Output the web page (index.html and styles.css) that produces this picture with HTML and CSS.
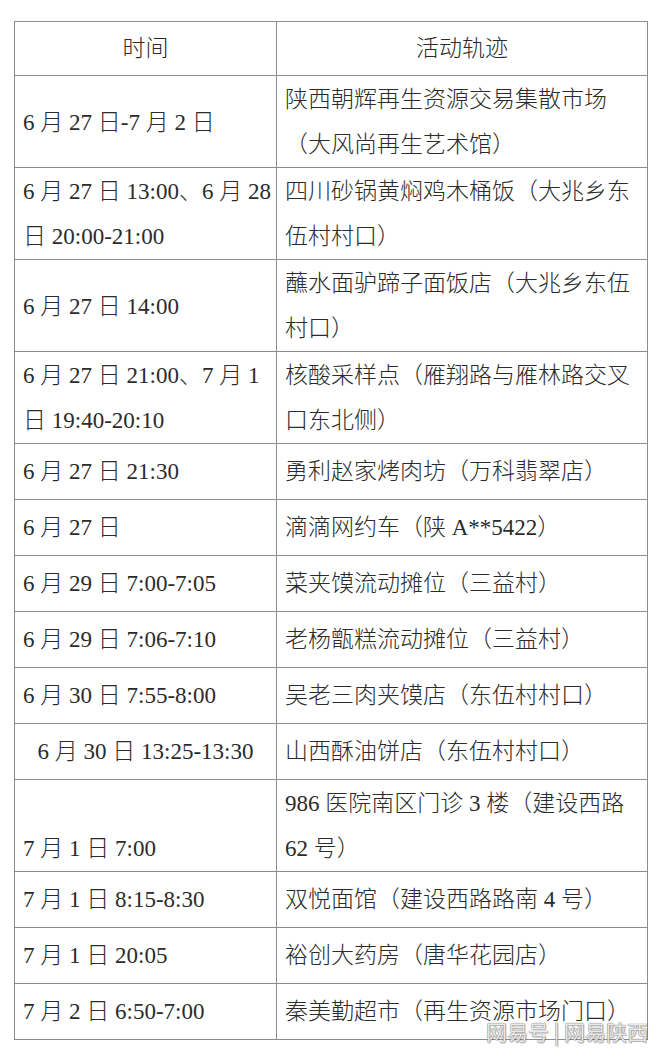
FILE: index.html
```html
<!DOCTYPE html>
<html lang="zh-CN">
<head>
<meta charset="utf-8">
<title>活动轨迹</title>
<link rel="stylesheet" href="styles.css">
</head>
<body>
<div class="page">
  <table class="trace">
    <colgroup><col class="c-time"><col class="c-place"></colgroup>
    <thead>
      <tr class="head"><th>时间</th><th>活动轨迹</th></tr>
    </thead>
    <tbody>
      <tr><td>6 月 27 日-7 月 2 日</td><td>陕西朝辉再生资源交易集散市场<br>（大风尚再生艺术馆）</td></tr>
      <tr><td>6 月 27 日 13:00、6 月 28<br>日 20:00-21:00</td><td>四川砂锅黄焖鸡木桶饭（大兆乡东<br>伍村村口）</td></tr>
      <tr><td>6 月 27 日 14:00</td><td>蘸水面驴蹄子面饭店（大兆乡东伍<br>村口）</td></tr>
      <tr><td>6 月 27 日 21:00、7 月 1<br>日 19:40-20:10</td><td>核酸采样点（雁翔路与雁林路交叉<br>口东北侧）</td></tr>
      <tr class="one"><td>6 月 27 日 21:30</td><td>勇利赵家烤肉坊（万科翡翠店）</td></tr>
      <tr class="one"><td>6 月 27 日</td><td>滴滴网约车（陕 A**5422）</td></tr>
      <tr class="one"><td>6 月 29 日 7:00-7:05</td><td>菜夹馍流动摊位（三益村）</td></tr>
      <tr class="one"><td>6 月 29 日 7:06-7:10</td><td>老杨甑糕流动摊位（三益村）</td></tr>
      <tr class="one"><td>6 月 30 日 7:55-8:00</td><td>吴老三肉夹馍店（东伍村村口）</td></tr>
      <tr class="one"><td class="center">6 月 30 日 13:25-13:30</td><td>山西酥油饼店（东伍村村口）</td></tr>
      <tr><td class="bottom">7 月 1 日 7:00</td><td>986 医院南区门诊 3 楼（建设西路<br>62 号）</td></tr>
      <tr class="one"><td>7 月 1 日 8:15-8:30</td><td>双悦面馆（建设西路路南 4 号）</td></tr>
      <tr class="one"><td>7 月 1 日 20:05</td><td>裕创大药房（唐华花园店）</td></tr>
      <tr class="one"><td>7 月 2 日 6:50-7:00</td><td>秦美勤超市（再生资源市场门口）</td></tr>
    </tbody>
  </table>
  <div class="mark">网易号 | 网易陕西</div>
</div>
</body>
</html>
```

FILE: styles.css
```css
html, body {
  margin: 0;
  padding: 0;
  background: #ffffff;
}

.page {
  position: relative;
  width: 660px;
  height: 1056px;
  padding: 21px 0 0 14px;
  box-sizing: border-box;
}

.trace {
  border-collapse: collapse;
  width: 633px;
  table-layout: fixed;
  font-family: "Liberation Serif", "Noto Sans CJK SC", serif;
  font-size: 23px;
  font-weight: 300;
  color: #2b2b2b;
}

.c-time { width: 262px; }
.c-place { width: 371px; }

.trace th,
.trace td {
  border: 1px solid #8c8c8c;
  padding: 1px 0 0 8px;
  line-height: 45px;
  text-align: left;
  vertical-align: middle;
  white-space: nowrap;
}

.trace th {
  font-weight: 300;
  text-align: center;
  padding: 0;
  height: 53px;
}

.trace tr.one td {
  height: 55px;
  padding-top: 0;
}

.trace td.center {
  text-align: center;
  padding-left: 0;
}

.trace td.bottom {
  vertical-align: bottom;
}

.mark {
  position: absolute;
  right: 12px;
  bottom: 10px;
  font-family: "Noto Sans CJK SC", sans-serif;
  font-size: 21px;
  color: rgba(255, 255, 255, 0.85);
  text-shadow: 0 0 1px #777, 0 0 1px #777, 1px 1px 1px rgba(0,0,0,0.25);
}
```
